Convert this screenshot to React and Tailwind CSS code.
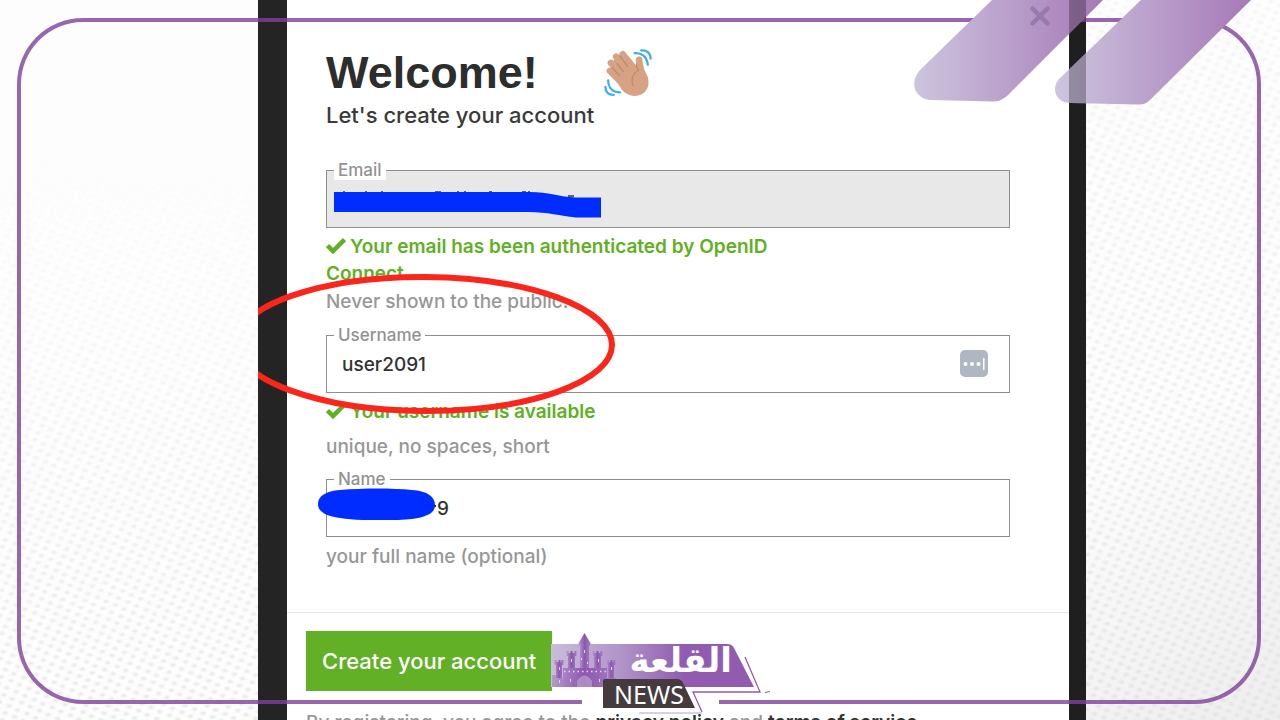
import React from 'react';

const textFont = "font-['Inter','Noto_Sans',sans-serif]";

function Texture() {
  return (
    <svg className="absolute inset-0 h-full w-full" aria-hidden="true">
      <defs>
        <filter id="soft" x="-20%" y="-20%" width="140%" height="140%">
          <feGaussianBlur stdDeviation="1" />
        </filter>
        <pattern id="bumps" width="13" height="12" patternUnits="userSpaceOnUse" patternTransform="rotate(-14) skewX(12)">
          <ellipse cx="4" cy="3" rx="2.6" ry="1.5" fill="#dedede" filter="url(#soft)" />
          <ellipse cx="10" cy="9" rx="2.6" ry="1.5" fill="#dedede" filter="url(#soft)" />
        </pattern>
        <linearGradient id="fadeLeft" x1="0" y1="0" x2="0" y2="1">
          <stop offset="0.2" stopColor="#000" />
          <stop offset="0.5" stopColor="#555" />
          <stop offset="1" stopColor="#eee" />
        </linearGradient>
        <linearGradient id="fadeRight" x1="0" y1="0" x2="0" y2="1">
          <stop offset="0" stopColor="#555" />
          <stop offset="1" stopColor="#fff" />
        </linearGradient>
        <linearGradient id="shade" x1="0" y1="0" x2="1" y2="1">
          <stop offset="0.75" stopColor="#eeeeee" stopOpacity="0" />
          <stop offset="1" stopColor="#eeeeee" />
        </linearGradient>
        <mask id="fade">
          <rect width="50%" height="100%" fill="url(#fadeLeft)" />
          <rect x="50%" width="50%" height="100%" fill="url(#fadeRight)" />
        </mask>
      </defs>
      <rect width="100%" height="100%" fill="url(#shade)" />
      <rect width="100%" height="100%" fill="url(#bumps)" mask="url(#fade)" />
    </svg>
  );
}

function WavingHand() {
  return (
    <svg className="h-12 w-12" viewBox="0 0 138 138" role="img" aria-label="waving hand">
      <g stroke="#d6a283" strokeWidth="19" strokeLinecap="round" fill="none">
        <path d="M17 63 58 104" />
        <path d="M20 40 62 84" />
        <path d="M35 22 76 68" />
        <path d="M54 15 92 62" />
        <path d="M101 31Q102 50 112 78" />
      </g>
      <path d="M40 34 62 22 88 50Q94 60 98 52L110 50Q116 62 122 72C134 94 128 120 108 130C88 140 66 134 52 118L22 72Z" fill="#d6a283" />
      <g stroke="#bd8b6d" strokeWidth="3.500" strokeLinecap="round" fill="none">
        <path d="M23 54 45 77" />
        <path d="M29 32 56 65" />
        <path d="M45 19 68 50" />
        <path d="M99 62C82 70 76 88 84 106" />
        <path d="M93 42Q93 56 100 61" />
      </g>
      <g stroke="#41aef0" strokeWidth="6.500" strokeLinecap="round" fill="none">
        <path d="M88 12C108 10 123 22 126 45" />
        <path d="M107 4C124 2 134 13 134 28" />
        <path d="M12 90C12 110 24 124 46 125" />
        <path d="M4 109C4 123 13 133 28 132" />
      </g>
    </svg>
  );
}

function Tick() {
  return (
    <svg className="mr-1 inline-block h-5 w-5 align-[-3px]" viewBox="0 0 20 20" fill="none" stroke="#60b024" strokeWidth="4.500" aria-hidden="true">
      <path d="M1.500 9.500 7 15 18.500 3.500" />
    </svg>
  );
}

function Field({ id, label, value, disabled, children, inputClass = 'pl-[15px]' }) {
  return (
    <div className="relative">
      <input
        id={id}
        defaultValue={value}
        disabled={disabled}
        className={`block h-[58px] w-full border border-[#8f8f8f] pr-16 text-[19px] font-medium text-[#333] outline-none ${inputClass} ${disabled ? 'bg-[#e8e8e8]' : 'bg-white'}`}
      />
      <label htmlFor={id} className="absolute -top-2.5 left-2 bg-white px-1 text-[17px] leading-5 font-medium text-[#929292]">
        {label}
      </label>
      {children}
    </div>
  );
}

function Frame() {
  return (
    <div className="pointer-events-none absolute top-[18px] right-[19px] bottom-4 left-[17px] flex opacity-80" aria-hidden="true">
      <div className="flex-[565] rounded-l-[66px] border-y-4 border-l-4 border-[#81409a]" />
      <div className="w-[137px] border-t-4 border-[#81409a]" />
      <div className="flex-[542] rounded-r-[66px] border-y-4 border-r-4 border-[#81409a]" />
    </div>
  );
}

const stripeOne = 'M80 0 8 70C-4 84 4 100 20 100L80 101.500Q88 102 95 96L191 0Z';
const stripeTwo = 'M231 0 150 78C140 88 146 103 160 103L228 104.500Q235 105 240 100L341 0Z';

function Stripes() {
  return (
    <svg className="pointer-events-none absolute top-0 right-0 h-[110px] w-[370px]" viewBox="0 0 370 110" aria-hidden="true">
      <defs>
        <linearGradient id="stripeTone"><stop stopColor="#cdc5de" /><stop offset="1" stopColor="#a679b7" /></linearGradient>
        <clipPath id="stripeClip"><path d={stripeOne} transform="translate(2 0)" /><path d={stripeTwo} /></clipPath>
      </defs>
      <path d={stripeOne} fill="url(#stripeTone)" transform="translate(2 0)" />
      <path d={stripeTwo} fill="url(#stripeTone)" />
      <rect x="159" width="17" height="110" fill="#000" opacity="0.27" clipPath="url(#stripeClip)" />
    </svg>
  );
}

function Tower({ x, y, w, h }) {
  return (
    <g transform={`translate(${x} ${y})`}>
      <path d={`M-1.500 0h2v2h2v-2h2v2h${w - 6}v-2h2v5h-1.500V${h}H0V5h-1.500Z`} />
    </g>
  );
}

function NewsLogo() {
  return (
    <svg className="pointer-events-none absolute bottom-0 left-[550px] h-[90px] w-[225px]" viewBox="0 0 225 90" role="img" aria-label="القلعة NEWS">
      <defs>
        <linearGradient id="banner"><stop stopColor="#c9bddb" /><stop offset="0.35" stopColor="#b093c8" /><stop offset="0.65" stopColor="#915cb0" /></linearGradient>
        <linearGradient id="castle"><stop stopColor="#b79bcd" /><stop offset="0.5" stopColor="#8d57ae" /><stop offset="1" stopColor="#a37cc0" /></linearGradient>
      </defs>
      <path d="M1 14H177Q182 14 184 18L204 57H1Z" fill="url(#banner)" />
      <g fill="url(#castle)">
        <path d="M34.500 3 41 14H28Z" />
        <path d="M29 13h11v3h-1v26h-9V16h-1z" />
        <Tower x={18} y={21} w={8} h={36} />
        <Tower x={44} y={21} w={8} h={36} />
        <Tower x={6} y={30} w={7} h={27} />
        <Tower x={58} y={30} w={7} h={27} />
        <path d="M2 45h4v3h7V38h44v10h9v9H2z" />
      </g>
      <path d="M27 57V51Q34.500 40 42 51V57Z" fill="#c2acd5" opacity="0.6" />
      <path d="M14 41.500H57" stroke="#e3d8ee" strokeWidth="1.500" strokeDasharray="1.500 3" />
      <g fill="#e0d4eb">
        <rect x="34" y="20" width="1" height="3" /><rect x="31" y="28" width="1" height="2" />
        <rect x="37" y="32" width="1" height="2" /><rect x="21" y="29" width="1" height="3" />
        <rect x="48" y="29" width="1" height="3" /><rect x="9" y="37" width="1" height="3" />
        <rect x="61" y="37" width="1" height="3" /><rect x="9" y="50" width="1" height="3" />
        <rect x="20" y="49" width="1" height="3" /><rect x="49" y="49" width="1" height="3" />
      </g>
      <text x="182" y="42" textAnchor="start" direction="rtl" fill="#fff" fontFamily="'DejaVu Sans', sans-serif" fontSize="34" fontWeight="700">القلعة</text>
      <path d="M55 49H127Q131 49 133 53L145 78H53V51Q53 49 55 49Z" fill="#453b3e" />
      <text x="64" y="74" fill="#fff" fontFamily="'Noto Sans', sans-serif" fontSize="25">NEWS</text>
      <g fill="none" stroke="#915cb0">
        <path d="M195 27 210 62H143L152 82" strokeWidth="1.300" />
        <path d="M89 83H152" opacity="0.6" />
        <path d="M215 62.500 220 61.500" />
      </g>
    </svg>
  );
}

export default function App() {
  return (
    <div className={`relative h-screen overflow-hidden bg-[#fdfdfd] ${textFont}`}>
      <Texture />
      <div className="relative h-full overflow-hidden pr-[194px] pl-[258px]">
        <div className="relative overflow-hidden bg-linear-to-r from-[#242424] to-[#1f1f1f] pr-[17px] pl-[29px]">
          <form className="bg-white" onSubmit={(e) => e.preventDefault()}>
            <div className="pr-[59px] pb-[42px] pl-[39px]">
              <header className="pt-12 pb-10">
                <div className="flex items-center gap-[66px]">
                  <h1 className="font-['Liberation_Sans',Arial,sans-serif] text-[45px] leading-[50px] font-bold text-[#2d2d2d]">Welcome!</h1>
                  <WavingHand />
                </div>
                <p className="pt-[3px] text-[22px] leading-[29px] font-medium text-[#3a3a3a]">Let&#39;s create your account</p>
              </header>

              <Field id="email" label="Email" value="" disabled>
                <svg className="pointer-events-none absolute top-[18px] left-2 h-8 w-[270px]" viewBox="0 0 270 32" aria-hidden="true">
                  <path d="M10 3v2M32 3v2M48 3v2M101 4h6M124 3v2M131 3v2M155 4h3M188 4h4M195 3v2M234 8h6" stroke="#333" strokeWidth="1.500" />
                  <path d="M0 4H196C214 4 226 9 242 9.500H267V29.500H242C226 28 214 24 194 24H0Z" fill="#002cff" />
                </svg>
              </Field>
              <div className="mt-[5px] text-[19px] leading-[27px]">
                <p className="max-w-[480px] font-semibold text-[#60b024]"><Tick />Your email has been authenticated by OpenID Connect</p>
                <p className="pt-px font-medium text-[#979797]">Never shown to the public.</p>
              </div>

              <div className="mt-5">
                <Field id="username" label="Username" value="user2091">
                  <svg className="absolute top-[15px] right-[22px] h-7 w-7" viewBox="0 0 28 28" aria-hidden="true">
                    <rect width="28" height="27" rx="5" fill="#b0b7c2" />
                    <g fill="#fff"><circle cx="5.500" cy="14" r="2" /><circle cx="12" cy="14" r="2" /><circle cx="18.500" cy="14" r="2" /><rect x="23" y="8" width="1.500" height="12" /></g>
                  </svg>
                </Field>
                <div className="mt-[5px] flex flex-col gap-2 text-[19px] leading-[27px] font-medium">
                  <p className="font-semibold text-[#60b024]"><Tick />Your username is available</p>
                  <p className="text-[#979797]">unique, no spaces, short</p>
                </div>
              </div>

              <div className="mt-[19px]">
                <Field id="name" label="Name" value="9" inputClass="pl-[110px]">
                  <svg className="pointer-events-none absolute top-[9px] -left-2 h-8 w-[120px]" viewBox="0 0 120 32" aria-hidden="true">
                    <path d="M116 18h2" stroke="#333" strokeWidth="2" />
                    <path d="M0 16C0 8 8 3 22 2C45 0 75 0 94 2C110 3 117 9 117 17C117 25 109 29 94 31C75 33 42 33 22 30C8 28 0 24 0 16Z" fill="#002cff" />
                  </svg>
                </Field>
                <p className="mt-1.5 text-[19px] leading-[27px] font-medium text-[#979797]">your full name (optional)</p>
              </div>
            </div>

            <div className="border-t border-[#e6e6e6] pt-[18px] pb-10 pl-[19px]">
              <button type="submit" className="block h-[60px] bg-[#62b025] px-4 text-[22px] font-medium text-white">Create your account</button>
              <p className="mt-[18px] text-[19px] leading-[27px] font-medium whitespace-nowrap text-[#979797]">
                By registering, you agree to the <a href="#privacy" className="font-semibold text-[#333]">privacy policy</a> and <a href="#terms" className="font-semibold text-[#333]">terms of service</a>.
              </p>
            </div>
          </form>
          <svg className="pointer-events-none absolute top-[270px] left-0 h-[150px] w-[360px]" viewBox="0 0 360 150" aria-hidden="true">
            <ellipse cx="166" cy="74" rx="188" ry="67" fill="none" stroke="#fb261b" strokeWidth="6" transform="rotate(0.300 166 74)" />
          </svg>
        </div>
      </div>
      <Frame />
      <Stripes />
      <button type="button" aria-label="Close" className="absolute top-1 right-[228px] h-6 w-6">
        <svg viewBox="0 0 24 24" className="h-6 w-6" stroke="#9779ad" strokeWidth="4.500" strokeLinecap="round" aria-hidden="true">
          <path d="M4.500 4.500 19.500 19.500M19.500 4.500 4.500 19.500" />
        </svg>
      </button>
      <NewsLogo />
    </div>
  );
}
